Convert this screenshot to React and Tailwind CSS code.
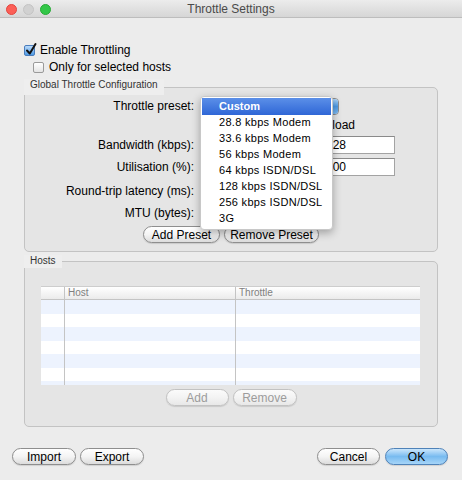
import React from "react";

const presets = [
  "28.8 kbps Modem",
  "33.6 kbps Modem",
  "56 kbps Modem",
  "64 kbps ISDN/DSL",
  "128 kbps ISDN/DSL",
  "256 kbps ISDN/DSL",
  "3G",
];

const btnBase =
  "flex h-[17px] items-center justify-center rounded-full border text-[12px] leading-none bg-linear-to-b shadow-[0_1px_1px_rgba(0,0,0,0.12)]";

const btnKinds = {
  normal: "border-[#8e8e8e] text-black from-white via-[#f4f4f4] to-[#dcdcdc]",
  primary: "border-[#4f82b8] text-black from-[#cbe6fb] via-[#78bbf0] to-[#a6d5f8]",
  disabled: "border-[#c2c2c2] text-[#9c9c9c] from-[#fbfbfb] via-[#f3f3f3] to-[#e8e8e8]",
};

const Btn = ({ children, width, kind = "normal" }) => (
  <div className={`${btnBase} ${btnKinds[kind]} ${width}`}>{children}</div>
);

const Group = ({ title, legendPad = "pb-[4px]", children }) => (
  <fieldset className="mx-[24px] rounded-[5px] border border-[#c3c3c3] bg-[#e5e5e5]">
    <legend className={`ml-[-1px] bg-[#eeeeee] px-[6px] text-[10px] leading-[12px] text-[#333] ${legendPad}`}>
      {title}
    </legend>
    {children}
  </fieldset>
);

const Field = ({ value }) => (
  <div className="flex h-[18px] w-full items-center border border-[#a3a3a3] border-t-[#8a8a8a] bg-white pl-[3px] text-[12px]">
    {value}
  </div>
);

const Row = ({ label, mt, children }) => (
  <div className={`flex h-[18px] items-center ${mt}`}>
    <span className="w-[169px] text-right text-[12px]">{label}</span>
    <div className="ml-[6px] flex items-center">{children}</div>
  </div>
);

const Check = ({ checked }) =>
  checked ? (
    <div className="relative h-[11px] w-[11px] rounded-[2px] border border-[#4a7cbb] bg-linear-to-b from-[#b9dafa] to-[#4d9be6]">
      <svg
        className="absolute left-[0px] top-[-3px] overflow-visible"
        width="12"
        height="13"
        viewBox="0 0 12 13"
      >
        <path
          d="M2 7.5 L4.8 10.5 L10.5 1"
          fill="none"
          stroke="#111"
          strokeWidth="2"
          strokeLinecap="round"
          strokeLinejoin="round"
        />
      </svg>
    </div>
  ) : (
    <div className="h-[11px] w-[11px] rounded-[2px] border border-[#9a9a9a] bg-linear-to-b from-white to-[#e4e4e4]" />
  );

export default function App() {
  return (
    <div className="flex h-[480px] w-[462px] flex-col bg-[#ececec] font-['Liberation_Sans',Arial,sans-serif] text-black">
      {/* title bar */}
      <div className="relative flex h-[18px] items-center border-b border-[#bdbdbd] bg-linear-to-b from-[#ececec] to-[#d6d6d6] px-[6px]">
        <div className="mt-[2px] flex gap-[6px]">
          <span className="h-[11px] w-[11px] rounded-full bg-[#fc5f57] border border-[#e2463f]" />
          <span className="h-[11px] w-[11px] rounded-full bg-[#d1d1d1] border border-[#c4c4c4]" />
          <span className="h-[11px] w-[11px] rounded-full bg-[#33c748] border border-[#27aa35]" />
        </div>
        <div className="mt-[1px] flex-1 pr-[45px] text-center text-[12px] text-[#4a4a4a]">Throttle Settings</div>
      </div>

      {/* checkboxes */}
      <div className="ml-[24px] mt-[25px] flex h-[14px] items-center gap-[5px] text-[12px]">
        <Check checked />
        <span>Enable Throttling</span>
      </div>
      <div className="ml-[33px] mt-[3px] flex h-[14px] items-center gap-[5px] text-[12px]">
        <Check />
        <span>Only for selected hosts</span>
      </div>

      <div className="mt-[5px]">
        <Group title="Global Throttle Configuration">
          <div className="pt-[2px]">
            <Row label="Throttle preset:">
              <div className="relative">
                <div className="flex h-[17px] w-[139px] overflow-hidden rounded-[4px] border border-[#8d8d8d] bg-white">
                  <div className="flex-1" />
                  <div className="w-[16px] bg-linear-to-b from-[#a9d3f7] via-[#4c9ae6] to-[#7fbaf0]" />
                </div>
                {/* open popup menu */}
                <div className="absolute left-0 top-[-2px] z-10 h-[134px] w-[133px] rounded-[4px] border border-[#c8c8c8] bg-white pt-[1px] shadow-[0_3px_8px_rgba(0,0,0,0.3)]">
                  <div className="mx-[1px] flex h-[17px] items-center bg-linear-to-b from-[#5b8fe8] to-[#2f66d6] pl-[17px] text-[11px] font-bold text-white">
                    Custom
                  </div>
                  {presets.map((p) => (
                    <div key={p} className="flex h-[16px] items-center pl-[18px] text-[11px] tracking-[0.3px]">
                      {p}
                    </div>
                  ))}
                </div>
              </div>
            </Row>
            <Row label="" mt="mt-[1px]">
              <span className="w-[118px]" />
              <span className="ml-[-1px] w-[78px] text-[12px]">Upload</span>
            </Row>
            <Row label="Bandwidth (kbps):" mt="mt-[2px]">
              <div className="w-[118px]">
                <Field value="" />
              </div>
              <div className="ml-[4px] w-[73px]">
                <Field value="128" />
              </div>
            </Row>
            <Row label="Utilisation (%):" mt="mt-[4px]">
              <div className="w-[118px]">
                <Field value="" />
              </div>
              <div className="ml-[4px] w-[73px]">
                <Field value="100" />
              </div>
            </Row>
            <Row label="Round-trip latency (ms):" mt="mt-[6px]">
              <div className="w-[118px]">
                <Field value="" />
              </div>
            </Row>
            <Row label="MTU (bytes):" mt="mt-[4px]">
              <div className="w-[118px]">
                <Field value="" />
              </div>
            </Row>
          </div>
          <div className="mt-[4px] flex justify-center gap-[4px] pb-[8px]">
            <Btn width="w-[77px]">Add Preset</Btn>
            <Btn width="w-[95px]">Remove Preset</Btn>
          </div>
        </Group>
      </div>

      <div className="mt-[3px]">
        <Group title="Hosts" legendPad="pb-[1px]">
          <div className="ml-[16px] mt-[18px] w-[379px] border-t border-[#cdcdcd]">
            <div className="grid h-[13px] grid-cols-[24px_171px_1fr] border-b border-[#c4c4c4] bg-linear-to-b from-white to-[#ebebeb] text-[10px] leading-[12px] text-[#808080]">
              <div className="border-r border-[#c4c4c4]" />
              <div className="border-r border-[#c4c4c4] pl-[3px]">Host</div>
              <div className="pl-[3px]">Throttle</div>
            </div>
            <div className="h-[85px] overflow-hidden">
              {[0, 1, 2, 3, 4, 5, 6].map((i) => (
                <div
                  key={i}
                  className={`grid h-[13.5px] grid-cols-[24px_171px_1fr] ${i % 2 === 0 ? "bg-[#edf3fe]" : "bg-white"}`}
                >
                  <div className="border-r border-[#c4c4c4]" />
                  <div className="border-r border-[#c4c4c4]" />
                  <div />
                </div>
              ))}
            </div>
          </div>
          <div className="mt-[4px] flex justify-center gap-[4px] pb-[20px]">
            <Btn width="w-[63px]" kind="disabled">Add</Btn>
            <Btn width="w-[64px]" kind="disabled">Remove</Btn>
          </div>
        </Group>
      </div>

      {/* bottom buttons */}
      <div className="mt-[21px] flex justify-between pl-[12px] pr-[14px]">
        <div className="flex gap-[4px]">
          <Btn width="w-[64px]">Import</Btn>
          <Btn width="w-[64px]">Export</Btn>
        </div>
        <div className="flex gap-[5px]">
          <Btn width="w-[63px]">Cancel</Btn>
          <Btn width="w-[63px]" kind="primary">OK</Btn>
        </div>
      </div>
    </div>
  );
}
